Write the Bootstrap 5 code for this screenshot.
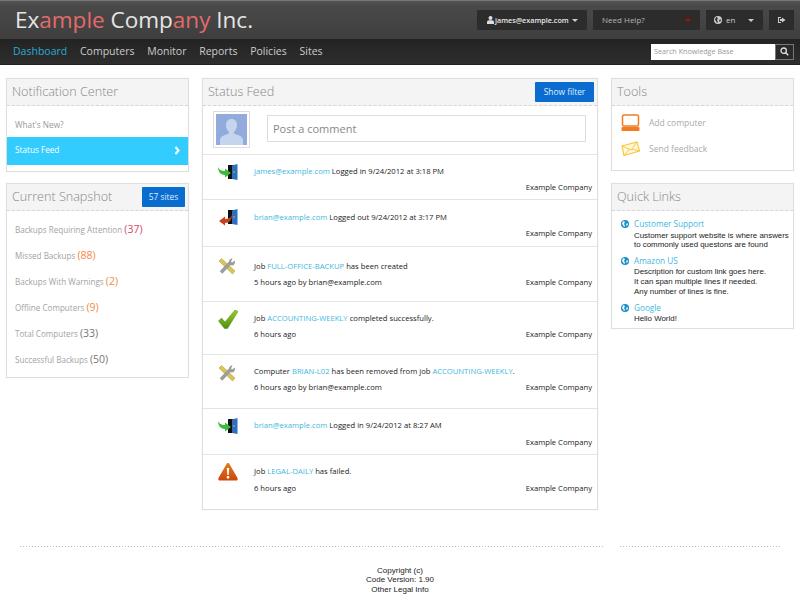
<!DOCTYPE html>
<html lang="en">
<head>
<meta charset="utf-8">
<title>Dashboard</title>
<link href="https://cdn.jsdelivr.net/npm/bootstrap@5.3.0/dist/css/bootstrap.min.css" rel="stylesheet">
<style>
html,body{height:600px;overflow:hidden}
body{font-family:"Open Sans",sans-serif;font-size:7.65px;color:#222;background:#fff}
a{text-decoration:none}
.top-band{height:39px;background:linear-gradient(#555 0,#4a4a4a 4px,#3e3e3e 100%);border-top:1px solid #777;padding:0 6px 0 15px}
.brand-name{font-size:22.5px;line-height:38px;color:#e6e6e6;font-weight:400}
.brand-name span{color:#e46a6a}
.top-tools{gap:6px;padding-top:9px}
.top-drop{height:20px;background:#2c2c2c;color:#ddd;font-size:8px;line-height:20px;display:flex;align-items:center;justify-content:space-between;padding:0 9px 0 10px}
.drop-user{width:110px;color:#e8e8e8;font-size:7.2px;font-weight:600;padding-left:10px}
.gap-tiny{gap:1px}
.drop-help{width:107px;color:#b5b5b5;padding-left:9px}
.drop-lang{width:57px;color:#ccc;padding-left:8px}
.drop-exit{width:25px;padding:0;justify-content:center}
.caret-down{width:0;height:0;border-left:3px solid transparent;border-right:3px solid transparent;border-top:3px solid #ccc;flex:none}
.caret-red{border-top-color:#c00}
.nav-band{height:26px;background:linear-gradient(#232323,#2e2e2e);padding:0 6px 0 13px;border-bottom:1px solid #222}
.nav-band a{font-size:10.5px;color:#ccc;margin-right:12.8px;line-height:25px}
.nav-band a.on{color:#29a9d8}
.search-box{display:flex;height:16px;width:143px;background:#fff}
.search-box input{border:0;flex:1;min-width:0;width:100%;font-size:7.2px;padding:0 3px;font-family:inherit;outline:0;height:15px}
.search-box input::placeholder{color:#999}
.search-go{width:19px;background:#2a2a2a;border:1px solid #777;display:flex;align-items:center;justify-content:center;flex:none}
.page-cols{padding:13px 6px 0;gap:13px;align-items:flex-start}
.side-col{width:183px;flex:none}
.mid-col{width:396px;flex:none}
.pane{border:1px solid #dedede;box-shadow:0 0 1px #eee;background:#fff}
.pane+.pane{margin-top:12px}
.pane+.snap-pane{margin-top:11px}
.pane-head{height:27px;background:#f4f4f4;border-bottom:1px dashed #d6d6d6;padding:0 5px;display:flex;align-items:center;justify-content:space-between;font-size:12.6px;font-weight:300;color:#888;line-height:1}
.pane-btn{background:#0a6cce;color:#dfeeff;font-size:8.4px;border:0;border-radius:1px;padding:0;height:20px;line-height:20px;text-align:center;margin-right:-2px;font-family:inherit;font-weight:400}
.btn-sites{width:43px}
.btn-filter{width:59px}
.notif-link{display:block;height:26px;line-height:27px;padding-left:8px;color:#999;font-size:8.2px;margin-top:5px}
.notif-link.active-item{background:#33ccff;color:#fff;height:28px;line-height:1;margin:0 0 6px;display:flex;align-items:center;justify-content:space-between;padding:0 7px 2px 8px}
.snap-row{height:26px;line-height:26px;padding-left:8px;color:#a3a3a3;font-size:8.1px;white-space:nowrap}
.snap-row b{font-weight:400;font-size:10.5px;color:#777}
.snap-row b.red{color:#d9466b}
.snap-row b.orange{color:#f58a3c}
.snap-list{padding:5px 0}
.comment-row{height:49px;border-bottom:1px solid #e4e4e4;padding:5px 11px 0 10px;display:flex;gap:17px}
.avatar-frame{width:37px;height:37px;border:1px solid #ddd;padding:2px;flex:none}
.avatar-frame svg{display:block}
.comment-input{flex:1;height:27px;margin-top:4px;border:1px solid #ddd;padding:0 5px;font-size:11px;color:#888;font-family:inherit;outline:0}
.comment-input::placeholder{color:#888}
.feed-row{border-bottom:1px solid #e4e4e4;padding:0 5px 0 15px;color:#222;display:flex}
.feed-row:last-child{border-bottom:0}
.feed-row a{color:#3fb7e0}
.feed-ico{width:36px;flex:none}
.feed-ico svg{display:block}
.feed-body{flex:1;min-width:0}
.row-a{height:45px}.row-b{height:47px}.row-c{height:55px}.row-d{height:53px}.row-e{height:54px}.row-f{height:46px}.row-g{height:54px}
.ico-9{padding-top:9px}.ico-8{padding-top:8px}.ico-11{padding-top:11px}.ico-10{padding-top:10px}
.body-8{padding-top:8px}.body-9{padding-top:9px}.body-11{padding-top:11px}
.feed-line{height:17px;line-height:17px;white-space:nowrap}
.feed-co{text-align:right;line-height:17px;margin-top:-1px}
.co-low{margin-top:0}
.tight{margin-top:-1px}
.tool-row{height:26px;display:flex;align-items:center;padding-left:9px;color:#aaa;font-size:8.5px;gap:9px}
.tool-row svg{flex:none}
.tool-list{padding:4px 0 8px}
.link-list{padding:6px 0 0 9px}
.link-item{display:flex;gap:5px;padding-bottom:4px}
.link-item svg{flex:none;margin-top:3px}
.link-item a{color:#3fb7e0;display:block;line-height:13px;font-size:8.2px}
.link-item p{margin:.5px 0 0;color:#222;font-family:"Liberation Sans",sans-serif;font-size:7.9px;line-height:9.7px;white-space:nowrap}
.rule-wrap{margin:36px 20px 0;display:flex;gap:15px;height:1px}
.rule-a,.rule-b{background-image:linear-gradient(to right,#bbb 1px,transparent 1px);background-size:3px 1px}
.rule-a{flex:1}
.rule-b{width:160px}
.foot-note{font-family:"Liberation Sans",sans-serif;font-size:8px;line-height:9.5px;color:#222;text-align:center;margin-top:18.500px}
</style>
</head>
<body>
<header>
  <div class="top-band d-flex justify-content-between">
    <div class="brand-name">Ex<span>ample</span> Comp<span>any</span> Inc.</div>
    <div class="top-tools d-flex">
      <div class="top-drop drop-user"><span class="d-flex align-items-center gap-tiny"><svg width="7" height="8" viewBox="0 0 7 8"><circle cx="3.500" cy="2" r="2" fill="#ddd"/><path d="M0 8V6q0-1.500 2-1.800h3q2 .3 2 1.800v2z" fill="#ddd"/></svg>james@example.com</span><i class="caret-down"></i></div>
      <div class="top-drop drop-help"><span>Need Help?</span><i class="caret-down caret-red"></i></div>
      <div class="top-drop drop-lang"><span class="d-flex align-items-center gap-1"><svg width="8" height="8" viewBox="0 0 8 8"><circle cx="4" cy="4" r="4" fill="#ccc"/><path d="M2 1l2 1-1 2 1 2-1 1-1-2-1-1zM6 3l1 1-1 2-1-1z" fill="#2c2c2c"/></svg>en</span><i class="caret-down"></i></div>
      <div class="top-drop drop-exit"><svg width="9" height="8" viewBox="0 0 9 8"><path d="M1 1h3v1H2v4h2v1H1zM5 1.500L8.500 4 5 6.500V5H3V3h2z" fill="#ccc"/></svg></div>
    </div>
  </div>
  <nav class="nav-band d-flex justify-content-between align-items-center">
    <div class="d-flex"><a class="on" href="#">Dashboard</a><a href="#">Computers</a><a href="#">Monitor</a><a href="#">Reports</a><a href="#">Policies</a><a href="#">Sites</a></div>
    <div class="search-box"><input type="text" placeholder="Search Knowledge Base"><span class="search-go"><svg width="9" height="9" viewBox="0 0 9 9"><circle cx="3.700" cy="3.700" r="2.700" fill="none" stroke="#ddd" stroke-width="1.300"/><path d="M5.700 5.700L8.300 8.300" stroke="#ddd" stroke-width="1.500"/></svg></span></div>
  </nav>
</header>
<main class="d-flex page-cols">
  <div class="side-col">
    <section class="pane">
      <div class="pane-head">Notification Center</div>
      <a class="notif-link" href="#">What's New?</a>
      <a class="notif-link active-item" href="#">Status Feed<svg width="7" height="9" viewBox="0 0 7 9"><path d="M1.500 1l3 3.500-3 3.500" fill="none" stroke="#fff" stroke-width="2"/></svg></a>
    </section>
    <section class="pane snap-pane">
      <div class="pane-head">Current Snapshot<button class="pane-btn btn-sites">57 sites</button></div>
      <div class="snap-list">
        <div class="snap-row">Backups Requiring Attention <b class="red">(37)</b></div>
        <div class="snap-row">Missed Backups <b class="orange">(88)</b></div>
        <div class="snap-row">Backups With Warnings <b class="orange">(2)</b></div>
        <div class="snap-row">Offline Computers <b class="orange">(9)</b></div>
        <div class="snap-row">Total Computers <b>(33)</b></div>
        <div class="snap-row">Successful Backups <b>(50)</b></div>
      </div>
    </section>
  </div>
  <div class="mid-col">
    <section class="pane">
      <div class="pane-head">Status Feed<button class="pane-btn btn-filter">Show filter</button></div>
      <div class="comment-row">
        <div class="avatar-frame"><svg width="31" height="31" viewBox="0 0 31 31"><rect width="31" height="31" fill="#92abdc"/><path d="M15.500 5c3.500 0 5.500 2.500 5.500 6s-2 6-3 7v1.500c3 1.500 8 2 9 6V31H4v-5.500c1-4 6-4.500 9-6V18c-1-1-3-3.500-3-7s2-6 5.500-6z" fill="#c6d5ee"/></svg></div>
        <input class="comment-input" type="text" placeholder="Post a comment">
      </div>
      <svg width="0" height="0" class="d-block"><defs>
        <linearGradient id="gr-check" x1="0" y1="0" x2="0" y2="1"><stop offset="0" stop-color="#9ccc2a"/><stop offset="1" stop-color="#4f8f10"/></linearGradient>
        <linearGradient id="gr-warn" x1="0" y1="0" x2="0" y2="1"><stop offset="0" stop-color="#ea7a1c"/><stop offset="1" stop-color="#c8480a"/></linearGradient>
        <symbol id="door-in" viewBox="0 0 20 17"><rect x="10" y="1" width="8" height="14" fill="#111"/><path d="M14 1.500L19.500 0v16L14 15z" fill="#2f6fc0"/><circle cx="16" cy="8" r=".7" fill="#fc0"/><path d="M0 3c1 2.500 3 4 7 4V4.500L13 9l-6 4.500V11C3 11 0 8 0 3z" fill="#3fb93c"/></symbol>
        <symbol id="door-out" viewBox="0 0 20 17"><rect x="10" y="1" width="8" height="14" fill="#111"/><path d="M14 1.500L19.500 0v16L14 15z" fill="#2f6fc0"/><circle cx="16" cy="8" r=".7" fill="#fc0"/><path d="M14 6c-1 2.500-3 4-7 4V7.500L1 12l6 4.500V14C11 14 14 11 14 6z" fill="#c9401b"/></symbol>
        <symbol id="tools-ico" viewBox="0 0 18 17"><path d="M1 3l2.500-2.500L17 13l-2.500 3z" fill="#d8c552" stroke="#a89a3a" stroke-width=".5"/><path d="M3 14.500L12 5" stroke="#9c9c9c" stroke-width="3.500"/><path d="M17 2.500l-3 2-1-1 1.500-3C12 .5 10.500 2.500 11 5.500l2 2c2.500.5 4.500-1.500 4-5z" fill="#9c9c9c"/></symbol>
      </defs></svg>
      <div class="feed-row row-a"><span class="feed-ico ico-9"><svg width="20" height="17"><use href="#door-in"/></svg></span>
        <div class="feed-body body-8"><div class="feed-line"><a href="#">james@example.com</a> Logged in 9/24/2012 at 3:18 PM</div><div class="feed-co">Example Company</div></div></div>
      <div class="feed-row row-b"><span class="feed-ico ico-9"><svg width="20" height="17"><use href="#door-out"/></svg></span>
        <div class="feed-body body-9"><div class="feed-line"><a href="#">brian@example.com</a> Logged out 9/24/2012 at 3:17 PM</div><div class="feed-co">Example Company</div></div></div>
      <div class="feed-row row-c"><span class="feed-ico ico-11"><svg width="18" height="17"><use href="#tools-ico"/></svg></span>
        <div class="feed-body body-11"><div class="feed-line">Job <a href="#">FULL-OFFICE-BACKUP</a> has been created</div><div class="feed-line tight d-flex justify-content-between"><span>5 hours ago by brian@example.com</span><span>Example Company</span></div></div></div>
      <div class="feed-row row-d"><span class="feed-ico ico-8"><svg width="20" height="19" viewBox="0 0 20 19"><path d="M.5 11l3-3 3.500 4L17 0l3 1.500L9.500 18.500H6.500z" fill="url(#gr-check)" stroke="#4d8a0e" stroke-width=".5"/></svg></span>
        <div class="feed-body body-8"><div class="feed-line">Job <a href="#">ACCOUNTING-WEEKLY</a> completed successfully.</div><div class="feed-line tight d-flex justify-content-between"><span>6 hours ago</span><span>Example Company</span></div></div></div>
      <div class="feed-row row-e"><span class="feed-ico ico-10"><svg width="18" height="17"><use href="#tools-ico"/></svg></span>
        <div class="feed-body body-8"><div class="feed-line">Computer <a href="#">BRIAN-L02</a> has been removed from job <a href="#">ACCOUNTING-WEEKLY</a>.</div><div class="feed-line tight d-flex justify-content-between"><span>6 hours ago by brian@example.com</span><span>Example Company</span></div></div></div>
      <div class="feed-row row-f"><span class="feed-ico ico-9"><svg width="20" height="17"><use href="#door-in"/></svg></span>
        <div class="feed-body body-8"><div class="feed-line"><a href="#">brian@example.com</a> Logged in 9/24/2012 at 8:27 AM</div><div class="feed-co co-low">Example Company</div></div></div>
      <div class="feed-row row-g"><span class="feed-ico ico-8"><svg width="20" height="18" viewBox="0 0 20 18"><path d="M10 0c.8 0 1.200.5 1.600 1.200L19.500 15c.6 1.200 0 2.500-1.200 2.500H1.700C.5 17.500-.1 16.200.5 15L8.400 1.200C8.800.500 9.200 0 10 0z" fill="url(#gr-warn)"/><path d="M8.800 5h2.400l-.5 7H9.300zM8.800 13h2.400v2.400H8.800z" fill="#fff"/></svg></span>
        <div class="feed-body body-8"><div class="feed-line">Job <a href="#">LEGAL-DAILY</a> has failed.</div><div class="feed-line d-flex justify-content-between"><span>6 hours ago</span><span>Example Company</span></div></div></div>
    </section>
  </div>
  <div class="side-col">
    <section class="pane">
      <div class="pane-head">Tools</div>
      <div class="tool-list">
        <div class="tool-row"><svg width="19" height="18" viewBox="0 0 19 18"><rect x="1.500" y="1" width="16" height="11" rx="1.500" fill="none" stroke="#f47b20" stroke-width="1.500"/><rect x=".5" y="13" width="18" height="4" rx="1" fill="#f47b20"/></svg>Add computer</div>
        <div class="tool-row"><svg width="19" height="16" viewBox="0 0 19 16"><path d="M1 5L16 1l2.500 9L3 14.500z" fill="#fff8dc" stroke="#f6c945" stroke-width="1.200"/><path d="M1 5l9 4 6-8M3 14.500l5.500-6.500M18.500 10L11 8" fill="none" stroke="#f6c945"/></svg>Send feedback</div>
      </div>
    </section>
    <section class="pane">
      <div class="pane-head">Quick Links</div>
      <div class="link-list">
        <div class="link-item"><svg width="8" height="8" viewBox="0 0 8 8"><circle cx="4" cy="4" r="4" fill="#1b8fc9"/><path d="M2 1l2 1-1 2 1 2-1 1-1-2-1-1zM6 3l1 1-1 2-1-1z" fill="#fff"/></svg><div><a href="#">Customer Support</a><p>Customer support website is where answers<br>to commonly used questons are found</p></div></div>
        <div class="link-item"><svg width="8" height="8" viewBox="0 0 8 8"><circle cx="4" cy="4" r="4" fill="#1b8fc9"/><path d="M2 1l2 1-1 2 1 2-1 1-1-2-1-1zM6 3l1 1-1 2-1-1z" fill="#fff"/></svg><div><a href="#">Amazon US</a><p>Description for custom link goes here.<br>It can span multiple lines if needed.<br>Any number of lines is fine.</p></div></div>
        <div class="link-item"><svg width="8" height="8" viewBox="0 0 8 8"><circle cx="4" cy="4" r="4" fill="#1b8fc9"/><path d="M2 1l2 1-1 2 1 2-1 1-1-2-1-1zM6 3l1 1-1 2-1-1z" fill="#fff"/></svg><div><a href="#">Google</a><p>Hello World!</p></div></div>
      </div>
    </section>
  </div>
</main>
<footer>
  <div class="rule-wrap"><div class="rule-a"></div><div class="rule-b"></div></div>
  <div class="foot-note">Copyright (c)<br>Code Version: 1.90<br>Other Legal Info</div>
</footer>
<script src="https://cdn.jsdelivr.net/npm/bootstrap@5.3.0/dist/js/bootstrap.bundle.min.js"></script>
</body>
</html>
